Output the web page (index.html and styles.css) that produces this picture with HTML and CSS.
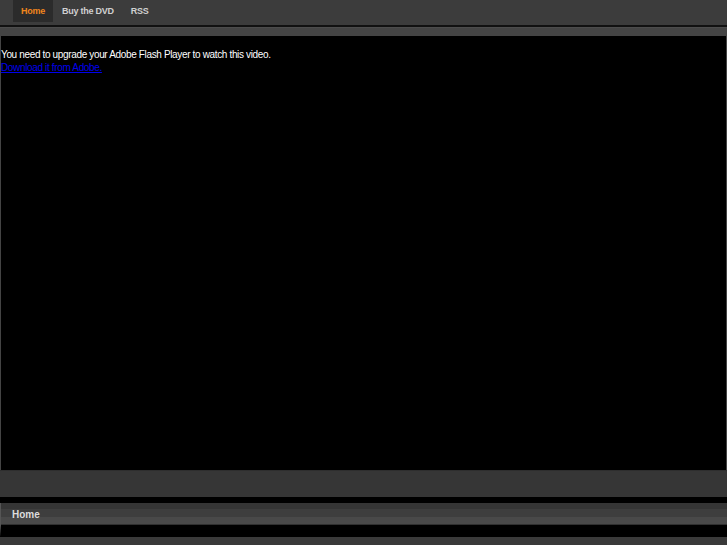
FILE: index.html
```html
<!DOCTYPE html>
<html lang="en">
<head>
    <meta charset="UTF-8">
    <meta name="viewport" content="width=device-width, initial-scale=1.0">
    <title>Home</title>
    <link rel="stylesheet" href="styles.css">
</head>
<body>
    <!-- top menu -->
    <div class="nav">
        <a class="tab tab-on" href="#">Home</a>
        <a class="tab" href="#">Buy the DVD</a>
        <a class="tab" href="#">RSS</a>
    </div>
    <div class="nav-bar"></div>

    <!-- flash player box -->
    <div class="player">
        <p class="flash-msg">You need to upgrade your Adobe Flash Player to watch this video.<br>
        <a href="#">Download it from Adobe.</a></p>
    </div>
    <div class="player-foot"></div>

    <div class="crumb">Home</div>
    <div class="footer"></div>
</body>
</html>
```

FILE: styles.css
```css
*{
    padding: 0px;
    margin: 0px;
}
body{
    background-color: #000;
    font-family: "Liberation Sans", Arial, sans-serif;
}
.nav{
    height: 25px;
    background-color: #3c3c3c;
    border-bottom: 2px solid #111;
    display: flex;
    padding-left: 13px;
}
.tab{
    display: block;
    height: 22px;
    line-height: 22px;
    padding: 0 8px;
    margin-right: 1px;
    color: #d0d0d0;
    font-size: 9px;
    font-weight: bold;
    letter-spacing: -0.25px;
    text-decoration: none;
}
.tab-on{
    background-color: #2b2b2b;
    color: #f0861c;
}
.nav-bar{
    height: 8px;
    background-color: #444;
    border-top: 1px solid #4c4c4c;
}
.player{
    height: 434px;
    background-color: #000;
    border-left: 1px solid #444;
    border-right: 1px solid #444;
    padding-top: 12px;
    box-sizing: border-box;
}
.flash-msg{
    color: #fff;
    font-size: 10px;
    line-height: 13px;
    letter-spacing: -0.35px;
}
.flash-msg a{
    color: #0000ee;
}
.player-foot{
    height: 26px;
    background-color: #363636;
    border-top: 1px solid #2e2e2e;
    border-bottom: 6px solid #000;
}
.crumb{
    height: 22px;
    line-height: 24px;
    padding-left: 11px;
    border-left: 1px solid #555;
    border-bottom: 12px solid #000;
    background: linear-gradient(#353535 0, #353535 6px, #3e3e3e 6px, #3e3e3e 14px, #494949 14px, #494949 21px, #303030 21px);
    color: #dcdcdc;
    font-size: 10px;
    font-weight: bold;
}
.footer{
    height: 8px;
    background-color: #3a3a3a;
}
```
